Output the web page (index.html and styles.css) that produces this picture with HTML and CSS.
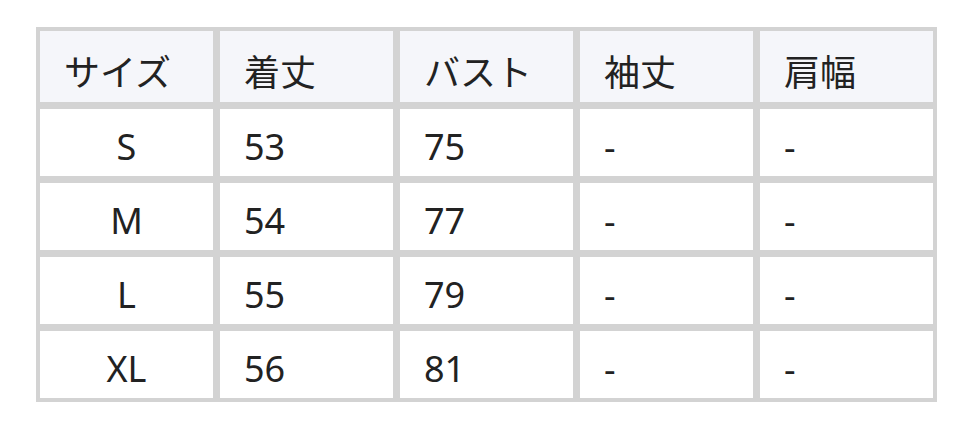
FILE: index.html
```
<!DOCTYPE html>
<html lang="ja">
<head>
<meta charset="utf-8">
<link rel="stylesheet" href="styles.css">
</head>
<body>
<div class="wrap">
<table class="size-table">
<thead>
<tr><th>サイズ</th><th>着丈</th><th>バスト</th><th>袖丈</th><th>肩幅</th></tr>
</thead>
<tbody>
<tr><td class="size">S</td><td>53</td><td>75</td><td>-</td><td>-</td></tr>
<tr><td class="size">M</td><td>54</td><td>77</td><td>-</td><td>-</td></tr>
<tr><td class="size">L</td><td>55</td><td>79</td><td>-</td><td>-</td></tr>
<tr><td class="size">XL</td><td>56</td><td>81</td><td>-</td><td>-</td></tr>
</tbody>
</table>
</div>
</body>
</html>
```
FILE: styles.css
```
html, body {
  margin: 0;
  padding: 0;
  background: #ffffff;
}
.wrap {
  padding: 27px 36px;
}
.size-table {
  border-collapse: separate;
  border-spacing: 1px;
  background: #d3d3d3;
  table-layout: fixed;
  width: 901px;
  font-family: "Noto Sans", "Noto Sans CJK JP", sans-serif;
  font-size: 36px;
  color: #222222;
}
.size-table th,
.size-table td {
  border: 3px solid #d3d3d3;
  padding: 8px 0 0 24px;
  text-align: left;
  font-weight: normal;
  background: #ffffff;
  line-height: 1;
  box-sizing: border-box;
}
.size-table th {
  background: #f5f6fa;
  height: 77px;
  padding-top: 12px;
}
.size-table td {
  height: 73px;
}
.size-table td.size {
  text-align: center;
  padding-left: 0;
}
```
